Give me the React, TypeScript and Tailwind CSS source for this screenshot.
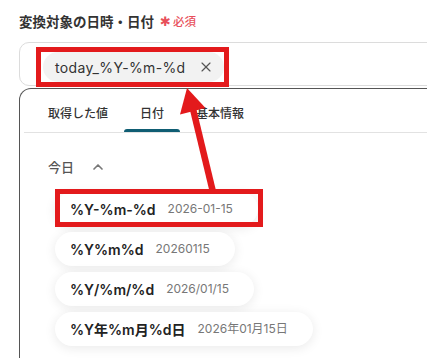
import { ChevronUp, X } from "lucide-react";

type DateFormat = {
  code: string;
  sample: string;
};

const formats: DateFormat[] = [
  { code: "%Y-%m-%d", sample: "2026-01-15" },
  { code: "%Y%m%d", sample: "20260115" },
  { code: "%Y/%m/%d", sample: "2026/01/15" },
  { code: "%Y年%m月%d日", sample: "2026年01月15日" },
];

const tabs = ["取得した値", "日付", "基本情報"];

export default function App() {
  return (
    <div className="relative h-[358px] w-[427px] overflow-hidden bg-white font-['Inter','Noto_Sans_CJK_JP',sans-serif] text-[#333]">
      {/* field label */}
      <div className="flex items-center gap-[6px] pl-[19px] pt-[14px] leading-[16px]">
        <span className="text-[13.5px] font-semibold text-[#333]">変換対象の日時・日付</span>
        <span className="flex items-center gap-[2px] text-[11.5px] font-medium text-[#e8505b]">
          <span className="font-['DejaVu_Sans'] text-[13px] leading-[16px]">✱</span>
          必須
        </span>
      </div>

      {/* input with chip */}
      <div className="ml-[19px] mt-[12px] flex h-[44px] w-[440px] items-start rounded-[10px] border border-[#dcdcdc] pl-[23px] pt-[9px]">
        <div className="flex h-[30px] items-center gap-[13px] rounded-full bg-[#f2f2f2] pl-[12px] pr-[10px]">
          <span className="text-[14px] tracking-[0.35px] text-[#333]">today_%Y-%m-%d</span>
          <X size={16} strokeWidth={1.75} className="text-[#555]" />
        </div>
      </div>

      {/* dropdown panel */}
      <div className="ml-[19px] mt-[2px] h-[300px] w-[440px] rounded-tl-[12px] border border-b-0 border-[#555]">
        <div className="mx-[4px] flex border-b border-[#e2e2e2] pl-[8px]">
          {tabs.map((tab) => {
            const active = tab === "日付";
            return (
              <div key={tab} className="flex flex-col items-stretch px-[16px]">
                <span className="pt-[17px] text-center text-[12px] font-medium leading-[16px] text-[#333]">{tab}</span>
                <div
                  className={
                    active
                      ? "-mx-[16px] mt-[7px] h-[3px] rounded-t-full bg-[#0f5d73]"
                      : "mt-[7px] h-[3px] bg-transparent"
                  }
                />
              </div>
            );
          })}
        </div>

        <div className="mt-[26px] flex items-center gap-[16px] pl-[28px] leading-[16px]">
          <span className="text-[13px] font-medium text-[#555]">今日</span>
          <ChevronUp size={16} strokeWidth={2.5} className="text-[#777]" />
        </div>

        <div className="mt-[17px] flex flex-col items-start gap-[6px] pl-[35px]">
          {formats.map((f) => (
            <div
              key={f.code}
              className="flex h-[34px] items-center gap-[12px] rounded-full bg-white pl-[15px] pr-[25px] shadow-[0_2px_12px_rgba(0,0,0,0.09)]"
            >
              <span className="text-[14px] font-semibold text-[#222]">{f.code}</span>
              <span className="text-[12px] text-[#777]">{f.sample}</span>
            </div>
          ))}
        </div>
      </div>

      {/* annotation boxes */}
      <div className="pointer-events-none absolute left-[36px] top-[47px] h-[40px] w-[193px] border-[5px] border-[#e31a1c]" />
      <div className="pointer-events-none absolute left-[55px] top-[189px] h-[38px] w-[208px] border-[5px] border-[#e31a1c]" />

      {/* annotation arrow */}
      <svg className="pointer-events-none absolute left-0 top-0" width="427" height="358" viewBox="0 0 427 358">
        <line x1="212.5" y1="190" x2="193" y2="109" stroke="#e31a1c" strokeWidth="6.5" />
        <polygon points="187,88 205.5,108 180,114.5" fill="#e31a1c" />
      </svg>
    </div>
  );
}
